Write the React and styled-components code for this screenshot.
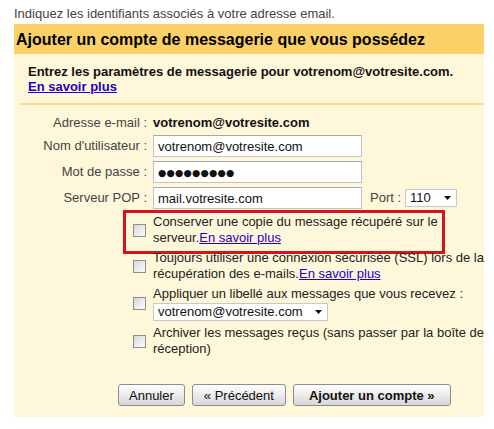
import styled, { createGlobalStyle } from "styled-components";

const GlobalStyle = createGlobalStyle`
  body {
    margin: 0;
    background: #fff;
    font-family: "Liberation Sans", Arial, sans-serif;
    color: #222;
  }
`;

const Page = styled.div`
  width: 494px;
  height: 429px;
  box-sizing: border-box;
  padding: 6px 10px 0 14px;
  overflow: hidden;
`;

const Hint = styled.div`
  font-size: 13px;
  line-height: 16px;
  color: #444;
  margin-bottom: 2px;
`;

const Header = styled.h2`
  margin: 0;
  height: 30px;
  line-height: 31px;
  padding-left: 2px;
  background: #f9d166;
  font-size: 16px;
  font-weight: bold;
  color: #000;
  white-space: nowrap;
`;

const Body = styled.div`
  background: #fff7d9;
  padding-bottom: 11px;
`;

const Intro = styled.div`
  margin-left: 6px;
  padding: 10px 8px 9px;
  border-bottom: 2px solid #f2dc96;
  font-size: 13px;
  font-weight: bold;
  line-height: 15px;
  color: #111;
`;

const Link = styled.a`
  color: #2200cc;
  text-decoration: underline;
  cursor: pointer;
  font-weight: ${({ $bold }) => ($bold ? "bold" : "normal")};
`;

const Form = styled.div`
  display: grid;
  grid-template-columns: 133px 1fr;
  column-gap: 6px;
  row-gap: 4px;
  align-items: center;
  margin-top: 10px;
  font-size: 13px;
  line-height: 16px;
`;

const Label = styled.label`
  text-align: right;
  color: #444;
  white-space: nowrap;
`;

const Value = styled.div`
  font-weight: bold;
  color: #111;
`;

const TextField = styled.input`
  width: 209px;
  height: 22px;
  box-sizing: border-box;
  margin: 0;
  padding: 0 4px;
  border: 1px solid #c3c3c3;
  border-top-color: #a8a8a8;
  background: #fff;
  font-family: ${({ $dots }) =>
    $dots ? '"DejaVu Sans", sans-serif' : '"Liberation Sans", Arial, sans-serif'};
  font-size: ${({ $dots }) => ($dots ? "9.5px" : "13px")};
  letter-spacing: ${({ $dots }) => ($dots ? "0.2px" : "0")};
  color: #111;
  outline: none;
`;

const FieldLine = styled.div`
  display: flex;
  align-items: center;
`;

const PortLabel = styled.span`
  margin: 0 4px 0 8px;
  color: #444;
`;

const Select = styled.div`
  display: flex;
  align-items: center;
  justify-content: space-between;
  box-sizing: border-box;
  width: ${({ $w }) => $w}px;
  height: 18px;
  padding: 0 5px 0 4px;
  border: 1px solid #c8c8c8;
  background: #fff;
  color: #111;
  font-size: 13px;
  cursor: default;
`;

const CheckRow = styled.div`
  grid-column: 1 / -1;
  display: grid;
  grid-template-columns: 133px 1fr;
  column-gap: 6px;
  align-items: center;
  position: relative;
  margin-top: ${({ $first }) => ($first ? "1px" : "0")};

  ${({ $highlight }) =>
    $highlight &&
    `
    &::after {
      content: "";
      position: absolute;
      left: 109px;
      top: -4px;
      width: 322px;
      height: 44px;
      box-sizing: border-box;
      border: 3px solid #d3141b;
      pointer-events: none;
    }
  `}
`;

const Box = styled.span`
  justify-self: end;
  margin-right: 1px;
  width: 13px;
  height: 13px;
  box-sizing: border-box;
  border: 1px solid #8f8f8f;
  background: linear-gradient(135deg, #d6d6d6 0%, #eeeeee 60%, #fbfbfb 100%);
`;

const CheckText = styled.div`
  white-space: nowrap;
  color: #222;
`;

const Buttons = styled.div`
  display: flex;
  gap: 7px;
  margin: 27px 0 0 104px;
`;

const Button = styled.button`
  height: 22px;
  margin: 0;
  padding: 0 ${({ $pad }) => $pad}px;
  border: 1px solid #8c8c8c;
  border-radius: 3px;
  background: linear-gradient(#fefefe, #e9e9e9 55%, #d7d7d7);
  font-family: "Liberation Sans", Arial, sans-serif;
  font-size: 13px;
  font-weight: ${({ $primary }) => ($primary ? "bold" : "normal")};
  color: #111;
  cursor: pointer;
`;

function Caret() {
  return (
    <svg width="7" height="4" viewBox="0 0 7 4">
      <path d="M0 0H7L3.5 4Z" fill="#111" />
    </svg>
  );
}

export default function App() {
  return (
    <Page>
      <GlobalStyle />
      <Hint>Indiquez les identifiants associés à votre adresse email.</Hint>
      <Header>Ajouter un compte de messagerie que vous possédez</Header>
      <Body>
        <Intro>
          Entrez les paramètres de messagerie pour votrenom@votresite.com.
          <br />
          <Link $bold>En savoir plus</Link>
        </Intro>

        <Form>
          <Label>Adresse e-mail :</Label>
          <Value>votrenom@votresite.com</Value>

          <Label>Nom d'utilisateur :</Label>
          <TextField defaultValue="votrenom@votresite.com" />

          <Label>Mot de passe :</Label>
          <TextField $dots readOnly value="●●●●●●●●●" />

          <Label>Serveur POP :</Label>
          <FieldLine>
            <TextField defaultValue="mail.votresite.com" />
            <PortLabel>Port :</PortLabel>
            <Select $w={52}>
              110
              <Caret />
            </Select>
          </FieldLine>

          <CheckRow $highlight $first>
            <Box />
            <CheckText>
              Conserver une copie du message récupéré sur le
              <br />
              serveur.<Link>En savoir plus</Link>
            </CheckText>
          </CheckRow>

          <CheckRow>
            <Box />
            <CheckText>
              Toujours utiliser une connexion sécurisée (SSL) lors de la
              <br />
              récupération des e-mails.<Link>En savoir plus</Link>
            </CheckText>
          </CheckRow>

          <CheckRow>
            <Box />
            <CheckText>
              Appliquer un libellé aux messages que vous recevez :
              <Select $w={175} style={{ marginTop: 1 }}>
                votrenom@votresite.com
                <Caret />
              </Select>
            </CheckText>
          </CheckRow>

          <CheckRow>
            <Box />
            <CheckText>
              Archiver les messages reçus (sans passer par la boîte de
              <br />
              réception)
            </CheckText>
          </CheckRow>
        </Form>

        <Buttons>
          <Button $pad={10}>Annuler</Button>
          <Button $pad={11}>« Précédent</Button>
          <Button $primary $pad={15}>
            Ajouter un compte »
          </Button>
        </Buttons>
      </Body>
    </Page>
  );
}
